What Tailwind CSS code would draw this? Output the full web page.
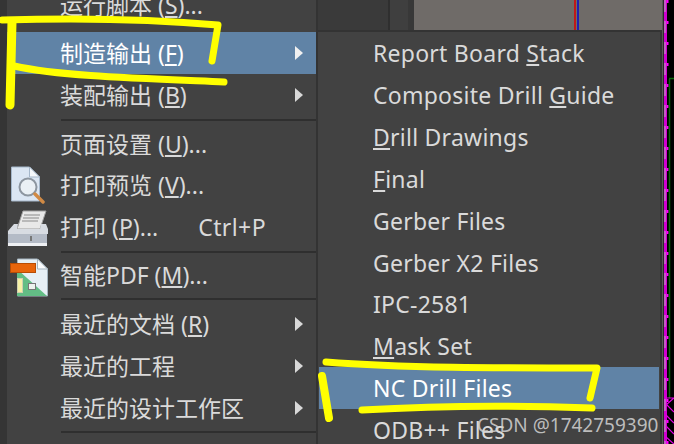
<!doctype html>
<html lang="zh">
<head>
<meta charset="utf-8">
<script src="https://cdn.jsdelivr.net/npm/@tailwindcss/browser@4"></script>
</head>
<body class="m-0 bg-[#424242]">
<div class="relative w-[674px] h-[444px] overflow-hidden flex bg-[#424242] text-[#dadada] text-[23px] leading-none font-['Noto_Sans','Noto_Sans_CJK_SC',sans-serif]">
  <!-- left menu -->
  <div class="w-[318px] h-[460px] shrink-0 flex flex-col bg-[#424242] border-l-[7px] border-l-[#353535] border-r-2 border-r-[#333333] -mt-[16px]">
    <div class="h-[42px] shrink-0 pl-[53px] flex items-center">运行脚本 (<u class="underline-offset-2">S</u>)...</div>
    <div class="h-[6px] shrink-0"></div>
    <div class="h-[42px] shrink-0 pl-[53px] pr-[13px] flex items-center justify-between bg-[#6083a6] text-white"><span>制造输出 (<u class="underline-offset-2">F</u>)</span><span class="w-0 h-0 border-y-[7px] border-y-transparent border-l-[8px] border-l-[#f0f0f0]"></span></div>
    <div class="h-[42px] shrink-0 pl-[53px] pr-[13px] flex items-center justify-between"><span>装配输出 (<u class="underline-offset-2">B</u>)</span><span class="w-0 h-0 border-y-[7px] border-y-transparent border-l-[8px] border-l-[#d8d8d8]"></span></div>
    <div class="ml-[54px] h-[2px] shrink-0 mt-[3px] mb-[2px] bg-[#2f2f2f]"></div>
    <div class="h-[42px] shrink-0 pl-[53px] flex items-center">页面设置 (<u class="underline-offset-2">U</u>)...</div>
    <div class="h-[42px] shrink-0 -mt-[1px] pl-[53px] flex items-center relative">
      <svg class="absolute left-[4px] top-[2px]" width="34" height="38" viewBox="0 0 34 38"><path d="M0.5 1h18l10 10v24h-28z" fill="#dbe6f3" stroke="#a5b7ca"/><path d="M18.5 1v10h10z" fill="#f5f8fb" stroke="#a5b7ca"/><circle cx="17" cy="21" r="8.5" fill="#eaf0f5" stroke="#8d96a0" stroke-width="2"/><path d="M24 28l8 8" stroke="#d08a45" stroke-width="3.5" stroke-linecap="round"/></svg>
      <span>打印预览 (<u class="underline-offset-2">V</u>)...</span>
    </div>
    <div class="h-[42px] shrink-0 pl-[53px] flex items-center relative">
      <svg class="absolute left-[1px] top-[4px]" width="41" height="37" viewBox="0 0 41 37"><path d="M9 19L15 1h23l-6 18z" fill="#e8e8e8" stroke="#a0a0a0"/><path d="M16 5h16M15 8h16M14 11h16" stroke="#8a8a8a" stroke-width="1.2"/><path d="M6 14h4l-1 5h23l1-5h5l2 5v5H0v-3z" fill="#d8dce2"/><path d="M0 24h39v9H0z" fill="#b4bbc6"/><path d="M0 33h39v3H0z" fill="#eef0f3"/><path d="M23 26v5" stroke="#777" stroke-width="2"/></svg>
      <span>打印 (<u class="underline-offset-2">P</u>)...</span><span class="ml-[40px] tracking-[0.4px]">Ctrl+P</span>
    </div>
    <div class="ml-[54px] h-[2px] shrink-0 mt-[3px] bg-[#2f2f2f]"></div>
    <div class="h-[45px] shrink-0 pl-[53px] flex items-center relative">
      <svg class="absolute left-[3px] top-[5px]" width="38" height="39" viewBox="0 0 38 39"><path d="M7.5 1h20l10 10v27h-30z" fill="#e7eff5" stroke="#a5b5c0"/><path d="M27.5 1v10h10z" fill="#fafcfd" stroke="#a5b5c0"/><path d="M7 11l30 27H7z" fill="#63bd85"/><rect x="0.5" y="5.500" width="25" height="9" fill="#e8650c" stroke="#b84d05"/><rect x="7.500" y="20.500" width="5" height="14" fill="#f7f1a6" stroke="#d0d0b0"/><rect x="18.500" y="25.500" width="7" height="6" fill="#eef2ee" stroke="#777"/></svg>
      <span>智能PDF (<u class="underline-offset-2">M</u>)...</span>
    </div>
    <div class="ml-[54px] h-[2px] shrink-0 bg-[#2f2f2f]"></div>
    <div class="h-[42px] shrink-0 mt-[3px] pl-[53px] pr-[13px] flex items-center justify-between"><span>最近的文档 (<u class="underline-offset-2">R</u>)</span><span class="w-0 h-0 border-y-[7px] border-y-transparent border-l-[8px] border-l-[#d8d8d8]"></span></div>
    <div class="h-[42px] shrink-0 pl-[53px] pr-[13px] flex items-center justify-between"><span>最近的工程</span><span class="w-0 h-0 border-y-[7px] border-y-transparent border-l-[8px] border-l-[#d8d8d8]"></span></div>
    <div class="h-[42px] shrink-0 pl-[53px] pr-[13px] flex items-center justify-between"><span>最近的设计工作区</span><span class="w-0 h-0 border-y-[7px] border-y-transparent border-l-[8px] border-l-[#d8d8d8]"></span></div>
    <div class="ml-[54px] h-[2px] shrink-0 mt-[2px] bg-[#2f2f2f]"></div>
  </div>
  <!-- middle: strip above the submenu -->
  <div class="w-[344px] shrink-0 flex flex-col">
    <div class="h-[30px] shrink-0 flex bg-[#3a3a3a]">
      <div class="w-[72px] border-r-2 border-r-[#2f2f2f]"></div>
      <div class="w-[24px] bg-[#3f3f3f] border-r-[6px] border-r-[#383838]"></div>
      <div class="flex-1 bg-[#6f6b68] relative"><div class="absolute left-[160px] top-0 w-[2px] h-full bg-[#c01818]"></div><div class="absolute left-[163px] top-0 w-[2px] h-full bg-[#2020b0]"></div></div>
    </div>
    <div class="flex-1 min-h-0 bg-[#424242] border-t-2 border-t-[#333333] border-r-2 border-r-[#333333] flex flex-col tracking-[0.25px]">
      <div class="h-[42px] shrink-0 pl-[55px] flex items-center">Report Board&nbsp;<u class="underline-offset-2">S</u>tack</div>
      <div class="h-[42px] shrink-0 pl-[55px] flex items-center">Composite Drill&nbsp;<u class="underline-offset-2">G</u>uide</div>
      <div class="h-[42px] shrink-0 pl-[55px] flex items-center"><u class="underline-offset-2">D</u>rill Drawings</div>
      <div class="h-[42px] shrink-0 pl-[55px] flex items-center"><u class="underline-offset-2">F</u>inal</div>
      <div class="h-[42px] shrink-0 pl-[55px] flex items-center">Gerber Files</div>
      <div class="h-[42px] shrink-0 pl-[55px] flex items-center">Gerber X2 Files</div>
      <div class="h-[41px] shrink-0 pl-[55px] flex items-center">IPC-2581</div>
      <div class="h-[42px] shrink-0 pl-[55px] flex items-center"><u class="underline-offset-2">M</u>ask Set</div>
      <div class="h-[42px] shrink-0 ml-[1px] mr-[1px] pl-[54px] flex items-center bg-[#6083a6] text-white">NC Drill Files</div>
      <div class="h-[42px] shrink-0 pl-[55px] flex items-center">ODB++ Files</div>
    </div>
  </div>
  <!-- canvas edge -->
  <svg class="shrink-0 bg-black" width="12" height="444" viewBox="0 0 12 444" fill="none">
    <path d="M0 0v444" stroke="#565656" stroke-width="3"/>
    <path d="M3.500 0v444" stroke="#d000d0" stroke-width="3"/>
    <path d="M3 0v444" stroke="#b8b8b8" stroke-width="1" stroke-dasharray="12 9"/>
    <path d="M5.500 0v444" stroke="#ff00ff" stroke-width="2" stroke-dasharray="3 18"/>
    <path d="M7.500 79V398M7 78.500h5" stroke="#0a6a0a" stroke-width="1.500"/>
    <path d="M3 398h9M4 405l8-7M4 415l8 8M4 426l8 8M4 404l8 8M4 437l8 7" stroke="#e000e0" stroke-width="1.200"/>
  </svg>
  <!-- annotations -->
  <svg class="absolute inset-0 pointer-events-none" width="674" height="444" viewBox="0 0 674 444" fill="none" stroke="#ffff00" stroke-linecap="round" stroke-linejoin="round">
    <path d="M2 20C70 18 140 18 218 25L212 61" stroke-width="7"/>
    <path d="M12 22L10 105" stroke-width="9"/>
    <path d="M14 66C60 76 130 78 224 82" stroke-width="7"/>
    <path d="M326 362C400 368 500 368 597 368L590 398" stroke-width="7"/>
    <path d="M322 376L329 418" stroke-width="8"/>
    <path d="M362 410C430 406 510 405 592 408" stroke-width="7"/>
  </svg>
  <div class="absolute left-[477px] top-[413px] text-[19px] leading-[24px] text-[#d4d4d4]/85">CSDN @1742759390</div>
</div>
</body>
</html>
